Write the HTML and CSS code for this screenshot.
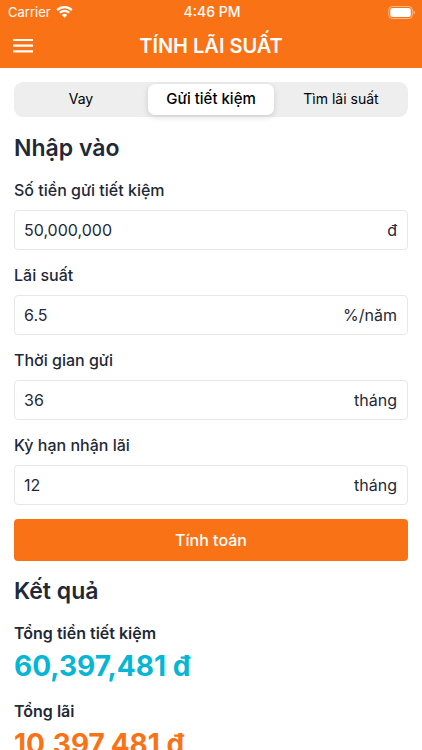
FILE: index.html
```html
<!DOCTYPE html>
<html lang="vi">
<head>
<meta charset="utf-8">
<meta name="viewport" content="width=device-width, initial-scale=1">
<title>Tính lãi suất</title>
<link rel="stylesheet" href="styles.css">
</head>
<body>
<header class="header">
  <div class="status">
    <div class="carrier">
      <span>Carrier</span>
      <svg class="wifi" viewBox="0 0 17 12" aria-hidden="true">
        <path d="M1.200 4.100a10.400 10.400 0 0 1 14.600 0M3.800 6.800a6.700 6.700 0 0 1 9.400 0" fill="none" stroke="currentColor" stroke-width="2.200"/>
        <path d="M5.800 9a3.900 3.900 0 0 1 5.400 0L8.500 11.800z" fill="currentColor"/>
      </svg>
    </div>
    <span class="clock">4:46 PM</span>
    <svg class="battery" viewBox="0 0 28 13" aria-hidden="true">
      <rect x=".8" y=".5" width="23.500" height="12" rx="3.500" fill="none" stroke="currentColor" opacity=".5"/>
      <rect x="2.300" y="2" width="20.500" height="9" rx="2" fill="currentColor"/>
      <path d="M25.600 4.500c1.800.7 1.800 3.300 0 4z" fill="currentColor" opacity=".55"/>
    </svg>
  </div>
  <div class="navbar">
    <button class="menu" type="button" aria-label="Menu">
      <svg viewBox="0 0 20 14" aria-hidden="true"><path d="M0 1h20M0 6.700h20M0 12.400h20" stroke="currentColor" stroke-width="2.200"/></svg>
    </button>
    <h1 class="title">TÍNH LÃI SUẤT</h1>
  </div>
</header>
<main class="content">
  <div class="tabs" role="tablist">
    <button class="tab" type="button" role="tab" aria-selected="false">Vay</button>
    <button class="tab active" type="button" role="tab" aria-selected="true">Gửi tiết kiệm</button>
    <button class="tab" type="button" role="tab" aria-selected="false">Tìm lãi suất</button>
  </div>
  <form class="form">
    <h2 class="heading">Nhập vào</h2>
    <div class="field">
      <label for="amount">Số tiền gửi tiết kiệm</label>
      <div class="box"><input id="amount" type="text" value="50,000,000"><span>đ</span></div>
    </div>
    <div class="field">
      <label for="rate">Lãi suất</label>
      <div class="box"><input id="rate" type="text" value="6.5"><span>%/năm</span></div>
    </div>
    <div class="field">
      <label for="duration">Thời gian gửi</label>
      <div class="box"><input id="duration" type="text" value="36"><span>tháng</span></div>
    </div>
    <div class="field">
      <label for="term">Kỳ hạn nhận lãi</label>
      <div class="box"><input id="term" type="text" value="12"><span>tháng</span></div>
    </div>
    <button class="submit" type="button">Tính toán</button>
  </form>
  <section class="results">
    <h2 class="heading">Kết quả</h2>
    <dl class="list">
      <div class="result">
        <dt>Tổng tiền tiết kiệm</dt>
        <dd class="total">60,397,481 đ</dd>
      </div>
      <div class="result">
        <dt>Tổng lãi</dt>
        <dd class="interest">10,397,481 đ</dd>
      </div>
    </dl>
  </section>
</main>
</body>
</html>
```
FILE: styles.css
```css
* {
  box-sizing: border-box;
}

html {
  scrollbar-width: none;
}

body {
  margin: 0;
  background: #fff;
  color: #1f2937;
  font-family: Inter, "Liberation Sans", sans-serif;
  font-size: 16px;
  line-height: 24px;
}

button,
input {
  font: inherit;
  color: inherit;
}

button {
  padding: 0;
  border: 0;
  background: none;
}

.header {
  background: #f97316;
  color: #fff;
}

.status {
  display: grid;
  grid-template-columns: 1fr auto 1fr;
  align-items: center;
  height: 24px;
  padding: 0 6px 0 8px;
  font-size: 13px;
}

.carrier {
  display: flex;
  align-items: center;
  gap: 5px;
}

.wifi {
  width: 17px;
  height: 12px;
}

.clock {
  font-size: 14px;
  font-weight: 500;
}

.battery {
  width: 28px;
  height: 13px;
  justify-self: end;
}

.navbar {
  display: grid;
  grid-template-columns: 44px 1fr 44px;
  align-items: center;
  height: 44px;
}

.menu {
  display: flex;
  align-items: center;
  height: 44px;
  padding-left: 13px;
}

.menu svg {
  width: 20px;
  height: 14px;
}

.title {
  margin: 0;
  font-size: 20px;
  font-weight: 600;
  text-align: center;
}

.content {
  padding: 14px;
}

.tabs {
  display: grid;
  grid-template-columns: repeat(3, 1fr);
  height: 35px;
  padding: 2px;
  border-radius: 9px;
  background: #eeeeef;
}

.tab {
  margin: 0 2px;
  padding-bottom: 1px;
  border-radius: 7px;
  color: #000;
  font-size: 14px;
}

.tab.active {
  background: #fff;
  box-shadow: 0 2px 6px rgb(0 0 0 / 14%);
  font-size: 15px;
  font-weight: 500;
}

.form {
  display: grid;
  gap: 13px;
  padding-top: 15px;
}

.heading {
  margin: 0;
  font-size: 23px;
  font-weight: 600;
  line-height: 33px;
}

.field {
  display: grid;
  gap: 8px;
}

.field label {
  font-weight: 500;
}

.box {
  display: flex;
  align-items: center;
  height: 40px;
  padding: 0 10px 0 9px;
  border: 1px solid #e5e7eb;
  border-radius: 4px;
}

.box input {
  flex: 1;
  min-width: 0;
  padding: 0;
  border: 0;
  outline: 0;
  background: none;
}

.submit {
  height: 42px;
  margin-top: 1px;
  border-radius: 4px;
  background: #f97316;
  color: #fff;
  font-weight: 500;
}

.results {
  padding-top: 14px;
}

.list {
  display: grid;
  gap: 12px;
  margin: 13px 0 0;
}

.result dt {
  font-weight: 600;
}

.result dd {
  margin: 0;
  font-size: 28px;
  font-weight: 700;
  line-height: 42px;
}

.total {
  color: #06b6d4;
}

.interest {
  color: #f97316;
}
```
